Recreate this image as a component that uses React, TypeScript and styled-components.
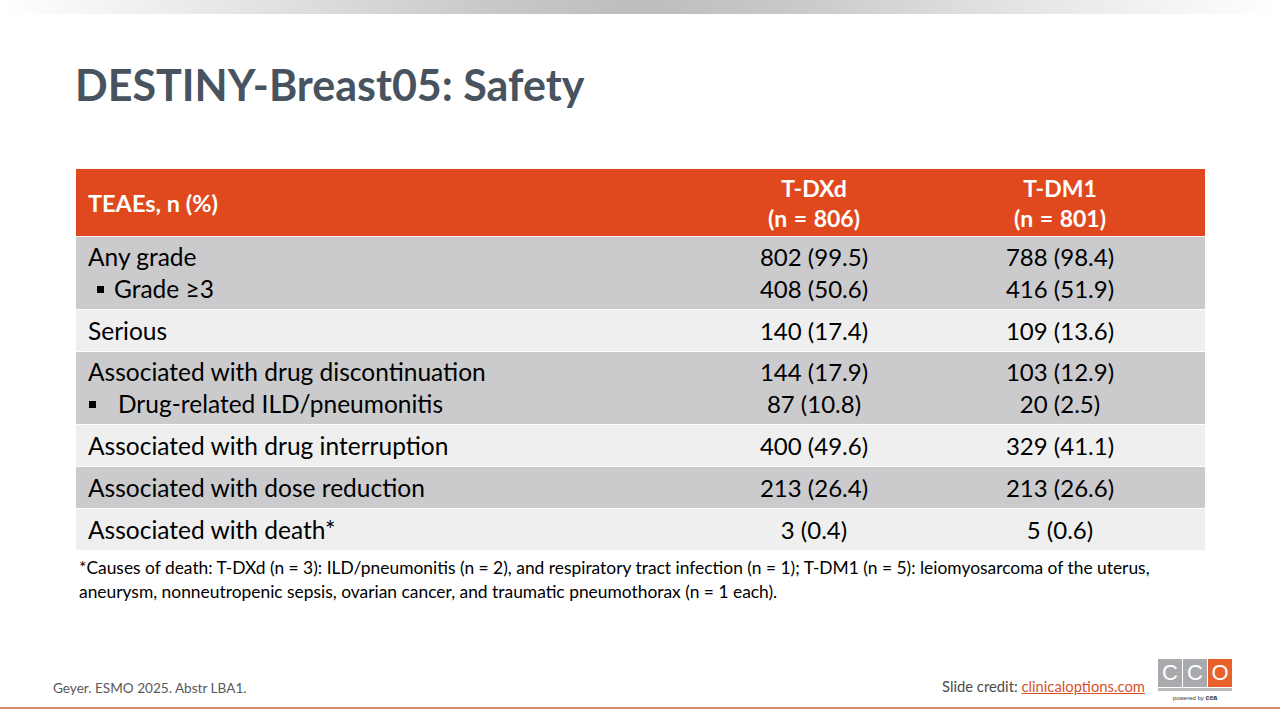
import React from 'react';
import styled, { createGlobalStyle } from 'styled-components';

const GlobalStyle = createGlobalStyle`
  html, body {
    margin: 0;
    padding: 0;
    background: #ffffff;
  }
  body {
    font-family: Lato, "Open Sans", "Liberation Sans", sans-serif;
  }
`;

const Slide = styled.div`
  width: 1280px;
  height: 720px;
  display: flex;
  flex-direction: column;
  background: #fff;
  overflow: hidden;
`;

const TopBand = styled.div`
  height: 14px;
  flex-shrink: 0;
  background: linear-gradient(
    to right,
    #ffffff 0%,
    #e6e6e6 18%,
    #c9c9c9 38%,
    #bdbdbd 50%,
    #c9c9c9 62%,
    #e8e8e8 82%,
    #ffffff 100%
  );
`;

const Title = styled.h1`
  margin: 45px 0 0 75px;
  font-family: Lato, "Open Sans", sans-serif;
  font-weight: 700;
  font-size: 43px;
  line-height: 52px;
  color: #47545f;
  letter-spacing: 0;
`;

const Table = styled.div`
  margin: 58px 0 0 76px;
  width: 1129px;
  display: flex;
  flex-direction: column;
  gap: 1px;
`;

const Row = styled.div<{ $tone: 'head' | 'dark' | 'light'; $h: number }>`
  display: grid;
  grid-template-columns: 1fr 248px 244px;
  padding-right: 23px;
  height: ${(p) => p.$h}px;
  align-items: center;
  background: ${(p) =>
    p.$tone === 'head' ? '#e0491e' : p.$tone === 'dark' ? '#cbcbcd' : '#efefef'};
  color: ${(p) => (p.$tone === 'head' ? '#ffffff' : '#000000')};
  font-size: 24.5px;
  line-height: 32px;
`;

const LabelCell = styled.div<{ $bold?: boolean }>`
  padding-left: 12px;
  font-weight: ${(p) => (p.$bold ? 700 : 400)};
  font-size: ${(p) => (p.$bold ? '23.5px' : 'inherit')};
`;

const ValueCell = styled.div<{ $bold?: boolean }>`
  text-align: center;
  font-weight: ${(p) => (p.$bold ? 700 : 400)};
  font-size: ${(p) => (p.$bold ? '23px' : '24px')};
  line-height: ${(p) => (p.$bold ? '30px' : 'inherit')};
  word-spacing: ${(p) => (p.$bold ? '1px' : '0')};
`;

const Sub = styled.div<{ $indent: number; $gap: number }>`
  display: flex;
  align-items: center;
  padding-left: ${(p) => p.$indent}px;
  &::before {
    content: '';
    width: 7px;
    height: 7px;
    background: #000;
    margin-right: ${(p) => p.$gap}px;
    flex-shrink: 0;
  }
`;

const Footnote = styled.p`
  margin: 6px 0 0 79px;
  width: 1140px;
  font-size: 17.4px;
  line-height: 24px;
  color: #000;
`;

const Spacer = styled.div`
  flex: 1;
`;

const Footer = styled.div`
  display: flex;
  align-items: flex-end;
  justify-content: space-between;
  padding: 0 47px 0 53px;
  height: 52px;
`;

const Citation = styled.div`
  font-size: 13.6px;
  color: #59595b;
  padding-bottom: 9px;
`;

const CreditGroup = styled.div`
  display: flex;
  align-items: flex-end;
  gap: 12px;
`;

const Credit = styled.div`
  font-size: 14.8px;
  color: #4b4b4b;
  padding-bottom: 10px;
  a {
    color: #d5532c;
    text-decoration: underline;
  }
`;

const Logo = styled.div`
  display: flex;
  flex-direction: column;
  align-items: center;
  width: 76px;
  padding-bottom: 4px;
`;

const LogoBoxes = styled.div`
  display: flex;
  gap: 1px;
  border-bottom: 3px solid #b9bbbd;
  padding-bottom: 1px;
`;

const LogoBox = styled.div<{ $orange?: boolean }>`
  width: 24px;
  height: 28px;
  display: flex;
  align-items: center;
  justify-content: center;
  background: ${(p) => (p.$orange ? '#e8602b' : '#a8aaad')};
  color: #fff;
  font-family: "Liberation Sans", Arial, sans-serif;
  font-size: 22px;
  font-weight: 400;
`;

const Powered = styled.div`
  font-family: "Liberation Sans", Arial, sans-serif;
  font-size: 6px;
  color: #333;
  margin-top: 3px;
  b {
    font-size: 7px;
  }
`;

const BottomRule = styled.div`
  height: 2px;
  margin-top: 2px;
  margin-bottom: 11px;
  background: #dc8b6a;
`;

export default function App() {
  return (
    <>
      <GlobalStyle />
      <Slide>
        <TopBand />
        <Title>DESTINY-Breast05: Safety</Title>
        <Table>
          <Row $tone="head" $h={67}>
            <LabelCell $bold>TEAEs, n (%)</LabelCell>
            <ValueCell $bold>
              T-DXd
              <br />
              (n = 806)
            </ValueCell>
            <ValueCell $bold>
              T-DM1
              <br />
              (n = 801)
            </ValueCell>
          </Row>
          <Row $tone="dark" $h={72}>
            <LabelCell>
              Any grade
              <Sub $indent={9} $gap={10}>Grade ≥3</Sub>
            </LabelCell>
            <ValueCell>
              802 (99.5)
              <br />
              408 (50.6)
            </ValueCell>
            <ValueCell>
              788 (98.4)
              <br />
              416 (51.9)
            </ValueCell>
          </Row>
          <Row $tone="light" $h={41}>
            <LabelCell>Serious</LabelCell>
            <ValueCell>140 (17.4)</ValueCell>
            <ValueCell>109 (13.6)</ValueCell>
          </Row>
          <Row $tone="dark" $h={72}>
            <LabelCell>
              Associated with drug discontinuation
              <Sub $indent={1} $gap={22}>Drug-related ILD/pneumonitis</Sub>
            </LabelCell>
            <ValueCell>
              144 (17.9)
              <br />
              87 (10.8)
            </ValueCell>
            <ValueCell>
              103 (12.9)
              <br />
              20 (2.5)
            </ValueCell>
          </Row>
          <Row $tone="light" $h={41}>
            <LabelCell>Associated with drug interruption</LabelCell>
            <ValueCell>400 (49.6)</ValueCell>
            <ValueCell>329 (41.1)</ValueCell>
          </Row>
          <Row $tone="dark" $h={41}>
            <LabelCell>Associated with dose reduction</LabelCell>
            <ValueCell>213 (26.4)</ValueCell>
            <ValueCell>213 (26.6)</ValueCell>
          </Row>
          <Row $tone="light" $h={41}>
            <LabelCell>Associated with death*</LabelCell>
            <ValueCell>3 (0.4)</ValueCell>
            <ValueCell>5 (0.6)</ValueCell>
          </Row>
        </Table>
        <Footnote>
          *Causes of death: T-DXd (n = 3): ILD/pneumonitis (n = 2), and respiratory tract infection (n = 1); T-DM1 (n = 5): leiomyosarcoma of the uterus,
          <br />
          aneurysm, nonneutropenic sepsis, ovarian cancer, and traumatic pneumothorax (n = 1 each).
        </Footnote>
        <Spacer />
        <Footer>
          <Citation>Geyer. ESMO 2025. Abstr LBA1.</Citation>
          <CreditGroup>
            <Credit>
              Slide credit: <a>clinicaloptions.com</a>
            </Credit>
            <Logo>
              <LogoBoxes>
                <LogoBox>C</LogoBox>
                <LogoBox>C</LogoBox>
                <LogoBox $orange>O</LogoBox>
              </LogoBoxes>
              <Powered>
                powered by <b>cea</b>
              </Powered>
            </Logo>
          </CreditGroup>
        </Footer>
        <BottomRule />
      </Slide>
    </>
  );
}
